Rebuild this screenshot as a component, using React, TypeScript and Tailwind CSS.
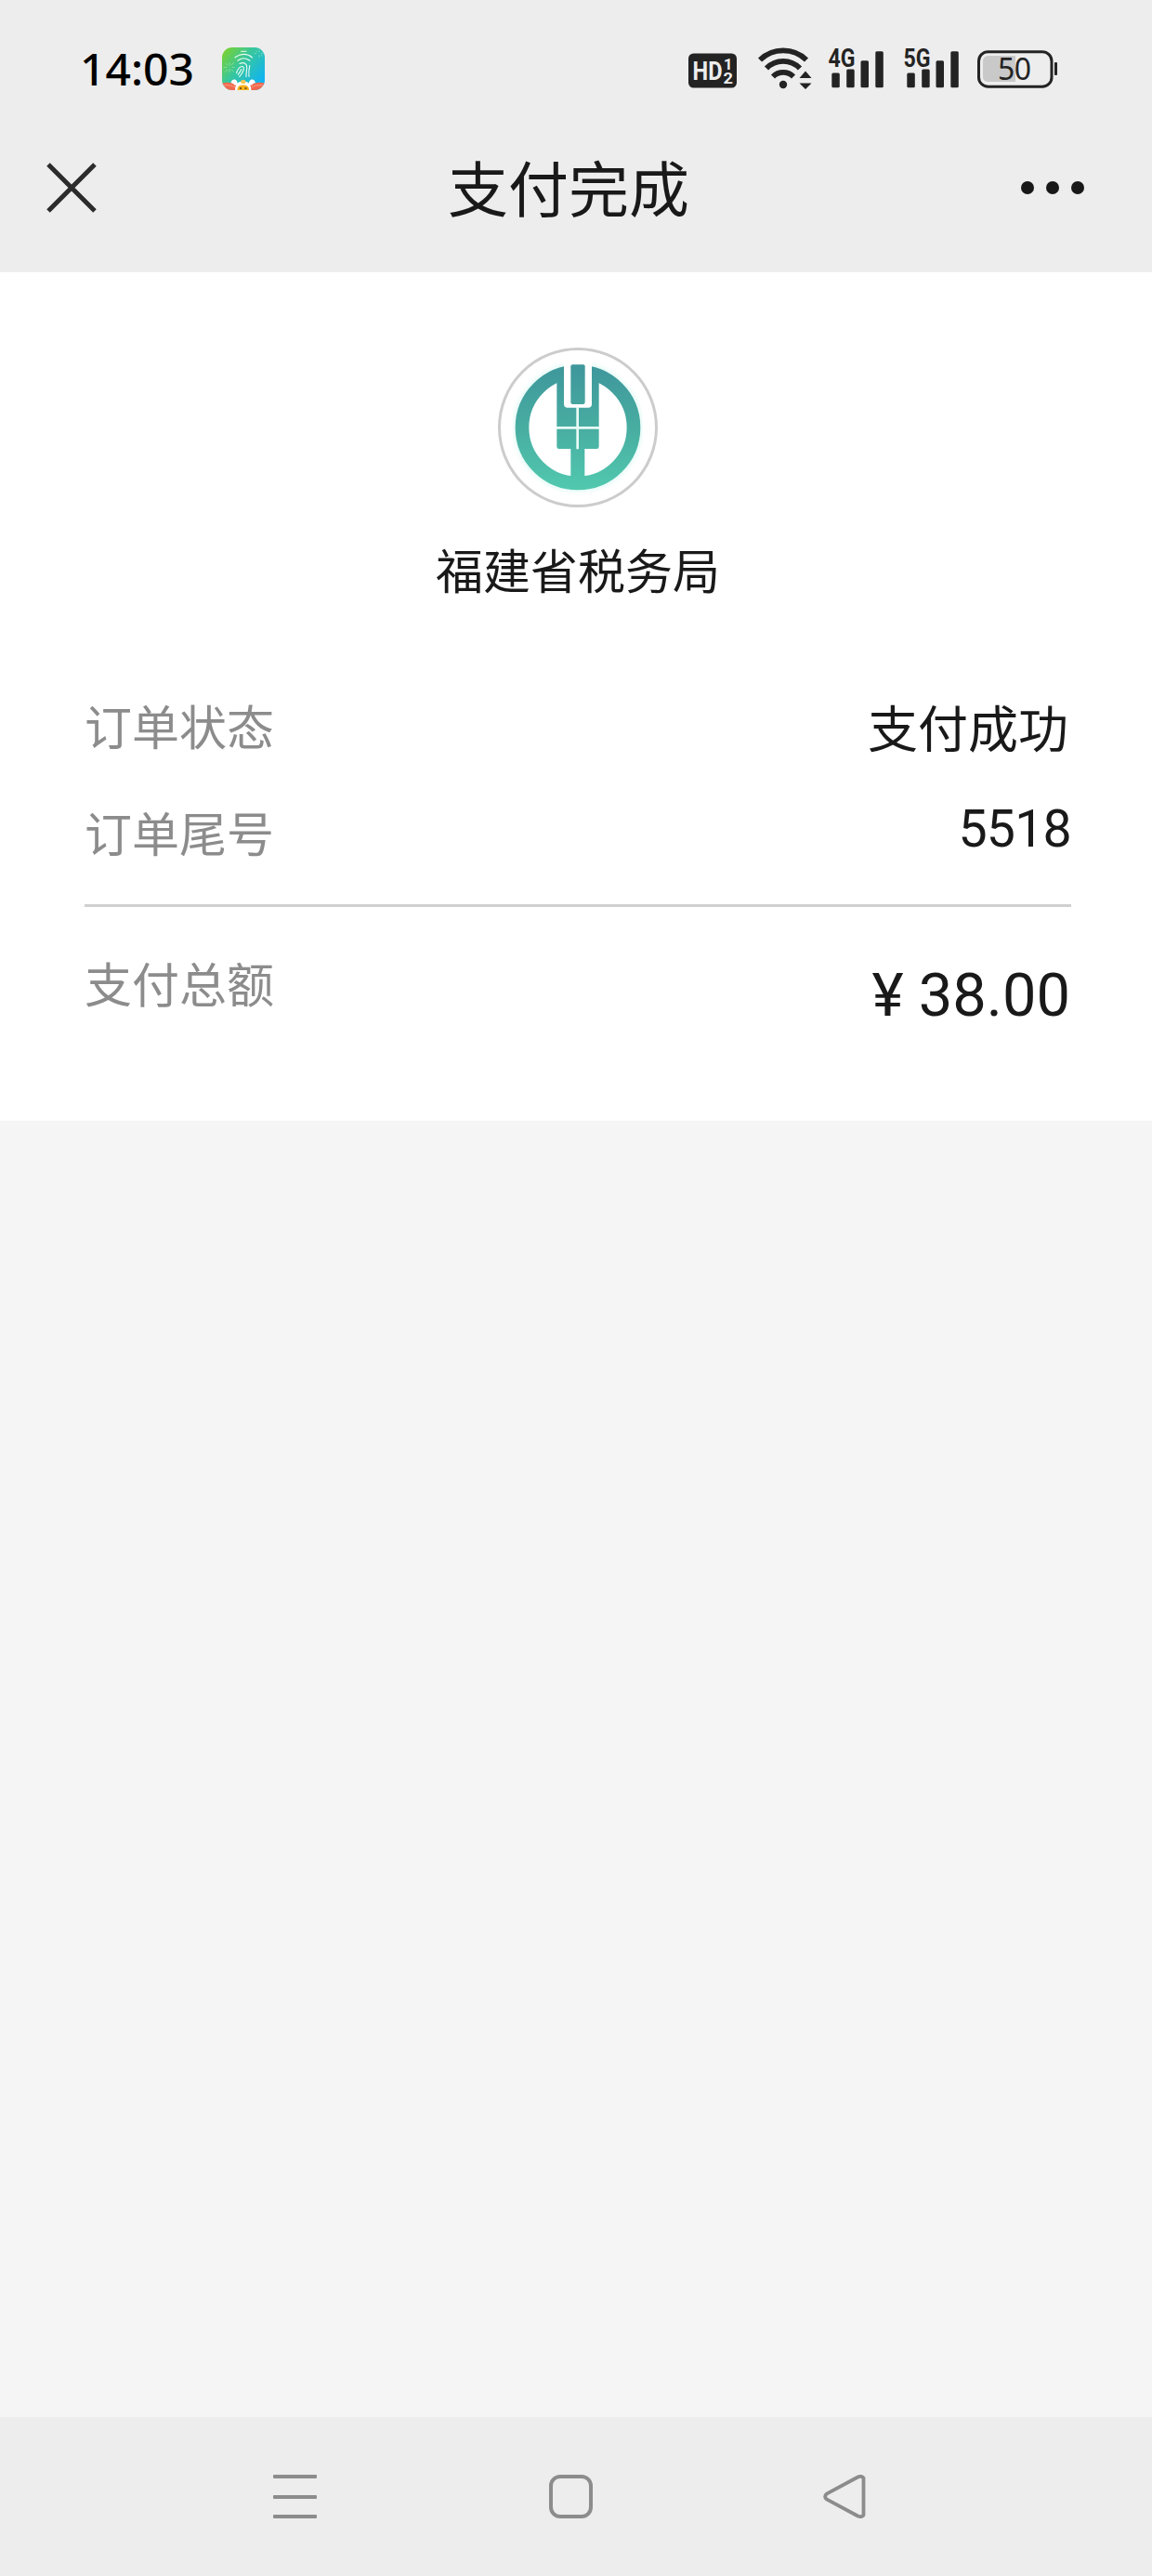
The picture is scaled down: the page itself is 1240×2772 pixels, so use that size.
import React from 'react';

interface OrderRow {
  label: string;
  value: string;
  valueClass: string;
}

const orderRows: OrderRow[] = [
  {
    label: '订单状态',
    value: '支付成功',
    valueClass: "mr-[3px] text-[54px] leading-[64px] font-['Noto_Sans_CJK_SC',sans-serif]",
  },
  {
    label: '订单尾号',
    value: '5518',
    valueClass: "text-[55.5px] leading-[56px] tracking-[-0.8px] font-['Roboto',sans-serif]",
  },
];

const AppBadge: React.FC = () => (
  <svg className="size-[46px]" viewBox="0 0 46 46" fill="none">
    <defs>
      <linearGradient id="badge" x1="0" y1="0" x2="1" y2="0.8">
        <stop offset="0" stopColor="#84d321" />
        <stop offset="0.45" stopColor="#38c79b" />
        <stop offset="1" stopColor="#0db2fb" />
      </linearGradient>
      <clipPath id="badgeClip">
        <rect width="46" height="46" rx="11" />
      </clipPath>
    </defs>
    <g clipPath="url(#badgeClip)">
      <rect width="46" height="46" fill="url(#badge)" />
      {/* fingerprint strokes */}
      <g stroke="#e9fbf3" strokeWidth="1.1" strokeLinecap="round">
        <path d="M20.500 4.200h5.500" />
        <path d="M14 11c5-4.800 13.500-4.800 18.500 0" />
        <path d="M16.800 14.200c4-3.200 9.200-3.200 13.200 0" />
        <path d="M19 17.500c5-2.200 8 .2 7.700 4.500-.2 3-.8 6-.7 9.500" />
        <path d="M15.500 27.500c1.200-3.500 3-6.500 5.500-7 2.200-.3 2.800 1.500 2 4-.8 2.700-2.300 5-4.300 7.200" />
        <path d="M20.700 23.500c-.8 2.200-2 4-3.500 5.800" />
        <path d="M29.800 19.500c-1 4-1.200 8-.8 12" />
      </g>
      {/* fireworks */}
      <g stroke="#c5efb0" strokeWidth="0.6" opacity="0.8">
        <path d="M8 20v-4M8 23v4M5.500 21.500h-4M10.500 21.500h3M6 19l-2.500-2M10 19l3-3M6 24l-2.500 2M10 24l2.500 2" />
        <path d="M40 5.500v-3M40 8v3M37 6.500h-2.500M42 6.500h2.500M38 5l-1.500-1.500M42 8l1.500 1.500" />
      </g>
      {/* lion mascot */}
      <path d="M0 38.500c5-1.500 11-1 16 2V46H0zM46 38.500c-5-1.500-11-1-16 2V46h16z" fill="#f2694e" />
      <path d="M2 41c5-1 9 0 12 2M44 41c-5-1-9 0-12 2" stroke="#f9b39c" strokeWidth="0.7" />
      <path d="M9.500 38c1-4 5-4.500 6.500-1.500l1.500 4H13c0-1.500-2-2-3.500-2.500zM36 38c-1-4-5-4.500-6.500-1.500l-1.500 4h4.500c0-1.500 2-2 3.500-2.500z" fill="#fff" />
      <path d="M14 46c0-6.500 3.500-9.500 8.700-9.500s8.700 3 8.700 9.500z" fill="#fff" />
      <path d="M16.500 46c0-4 2-5.500 6.200-5.500S29 42 29 46z" fill="#f6b21d" />
      <rect x="20.300" y="35" width="5" height="4" rx="1.500" fill="#f7c653" />
      <path d="M19 44h2M24.500 44h2" stroke="#533a16" strokeWidth="1.500" />
    </g>
  </svg>
);

const HdIcon: React.FC = () => (
  <svg className="h-[46px] w-[52px]" viewBox="0 0 52 46">
    <rect x="0" y="6.500" width="52" height="37" rx="5.500" fill="#232323" />
    <g fill="#ededed" fontFamily="Roboto, sans-serif" fontWeight="700">
      <text x="4.500" y="35" fontSize="28.500" textLength="32" lengthAdjust="spacingAndGlyphs">HD</text>
      <text x="38" y="24" fontSize="17" textLength="9.500" lengthAdjust="spacingAndGlyphs">1</text>
      <text x="37.500" y="38.500" fontSize="17" textLength="10.500" lengthAdjust="spacingAndGlyphs">2</text>
    </g>
  </svg>
);

const WifiIcon: React.FC = () => (
  <svg className="h-[46px] w-[58px]" viewBox="0 0 58 46" fill="none">
    <g stroke="#232323" strokeWidth="5.800">
      <path d="M2 13.500A36 36 0 0 1 52 13.500" />
      <path d="M9 22.500A25 25 0 0 1 45 22.500" />
      <path d="M16 31.500A15.500 15.500 0 0 1 38 31.500" />
    </g>
    <circle cx="27" cy="40" r="4.200" fill="#232323" />
    <path d="M51 25.500l6.500 7.500h-13zM51 45l6.500-6.500h-13z" fill="#232323" />
  </svg>
);

const SignalIcon: React.FC<{ label: string }> = ({ label }) => (
  <svg className="h-[46px] w-[60px] overflow-visible" viewBox="0 0 60 46" fill="#232323">
    <text
      x="0.500"
      y="21"
      fontSize="27"
      fontWeight="700"
      fontFamily="Roboto, sans-serif"
      textLength="29"
      lengthAdjust="spacingAndGlyphs"
    >
      {label}
    </text>
    <rect x="4.300" y="27.500" width="8.500" height="15.700" rx="1.500" />
    <rect x="20.200" y="23.500" width="8.500" height="19.700" rx="1.500" />
    <rect x="35.500" y="14.300" width="8.500" height="28.900" rx="1.500" />
    <rect x="51.300" y="4.200" width="8.500" height="39" rx="1.500" />
  </svg>
);

const BatteryIcon: React.FC = () => (
  <svg className="h-[46px] w-[87px]" viewBox="0 0 87 46">
    <rect x="1.500" y="4.700" width="78.500" height="37.500" rx="10" fill="none" stroke="#232323" strokeWidth="3" />
    <path d="M41 9H12q-6 0-6 6v17q0 5 6 5h29z" fill="#c9c9c9" />
    <rect x="83" y="16" width="3" height="14" rx="1" fill="#232323" />
    <text x="22" y="34.500" fontSize="32" fontFamily="'Noto Sans', sans-serif" textLength="36" fill="#232323">50</text>
  </svg>
);

const BankLogo: React.FC = () => (
  <div className="flex size-[172px] items-center justify-center rounded-full border-[3px] border-[#cccccc] bg-white">
    <svg className="size-[140px]" viewBox="0 0 420 420">
      <defs>
        <linearGradient id="bank" x1="0" y1="0" x2="0" y2="420" gradientUnits="userSpaceOnUse">
          <stop offset="0.050" stopColor="#3f989c" />
          <stop offset="0.500" stopColor="#48ada1" />
          <stop offset="0.950" stopColor="#51c7ae" />
        </linearGradient>
        <filter id="glow" x="-10%" y="-10%" width="120%" height="120%">
          <feGaussianBlur stdDeviation="8" />
        </filter>
      </defs>
      <circle cx="210" cy="210" r="182" fill="none" stroke="#dffaf5" strokeWidth="50" filter="url(#glow)" />
      <circle cx="210" cy="210" r="158" fill="#fff" />
      <circle cx="210" cy="210" r="180" fill="none" stroke="url(#bank)" strokeWidth="44" />
      <path d="M165 0h90v146h-90z" fill="#fff" />
      <path
        d="M142 55l23-42v121q0 12 12 12h66q12 0 12-12V13l23 42v217q0 7-7 7h-39v110h-45V279h-38q-7 0-7-7z"
        fill="url(#bank)"
      />
      <rect x="187" y="7" width="46" height="128" rx="6" fill="url(#bank)" />
      <path d="M209 142v138M141 211h138" stroke="#e8fbf6" strokeWidth="8" />
    </svg>
  </div>
);

const StatusBar: React.FC = () => (
  <div className="flex h-[148px] items-center pr-[101px] pl-[86px]">
    <span className="w-[153px] font-['Noto_Sans',sans-serif] text-[48px] leading-none font-medium text-black">14:03</span>
    <AppBadge />
    <div className="ml-auto flex items-center">
      <HdIcon />
      <div className="ml-[23px] flex"><WifiIcon /></div>
      <div className="ml-[17px] flex"><SignalIcon label="4G" /></div>
      <div className="ml-[21px] flex"><SignalIcon label="5G" /></div>
      <div className="ml-[20px] flex"><BatteryIcon /></div>
    </div>
  </div>
);

const TitleBar: React.FC = () => (
  <div className="flex h-[108px] items-center pr-[73px] pl-[50px]">
    <svg className="size-[54px]" viewBox="0 0 54 54" stroke="#2b2b2b" strokeWidth="5">
      <path d="M2 2l50 50M52 2L2 52" />
    </svg>
    <h1 className="-mt-[3px] ml-[378px] text-[65px] leading-[105px] font-normal">支付完成</h1>
    <div className="ml-auto flex gap-[13px]">
      <span className="size-[14px] rounded-full bg-[#181818]" />
      <span className="size-[14px] rounded-full bg-[#181818]" />
      <span className="size-[14px] rounded-full bg-[#181818]" />
    </div>
  </div>
);

const NavBar: React.FC = () => (
  <nav className="flex h-[171px] items-center pl-[294px]">
    <div className="flex h-[47px] w-[47px] flex-col justify-between">
      <span className="h-1 rounded-[1px] bg-[#8c8c8c]" />
      <span className="h-1 rounded-[1px] bg-[#8c8c8c]" />
      <span className="h-1 rounded-[1px] bg-[#8c8c8c]" />
    </div>
    <span className="ml-[250px] size-[47px] rounded-[12px] border-4 border-[#8c8c8c]" />
    <svg className="ml-[248px] h-[47px] w-[46px]" viewBox="0 0 46 47" fill="none">
      <path
        d="M3.700 20.700Q.500 23.500 3.700 26.300L36.500 44Q41 46.500 43.500 43.500V3.500Q41 .500 36.500 3z"
        stroke="#8c8c8c"
        strokeWidth="3.800"
        strokeLinejoin="round"
      />
    </svg>
  </nav>
);

const App: React.FC = () => {
  return (
    <div className="flex h-[2772px] w-[1240px] flex-col bg-[#ededed] font-['Noto_Sans_CJK_SC',sans-serif] text-[#191919]">
      <header className="h-[293px]">
        <StatusBar />
        <TitleBar />
      </header>

      <main className="flex-1 bg-[#f5f5f5]">
        <section className="h-[913px] bg-white pt-[81px] pr-[87px] pl-[91px]">
          <div className="flex flex-col items-center">
            <BankLogo />
            <p className="mt-[36px] text-[51px] leading-[60px]">福建省税务局</p>
          </div>

          <div className="mt-[108px] flex flex-col gap-[51px]">
            {orderRows.map((row) => (
              <div key={row.label} className="flex items-start justify-between">
                <span className="text-[51px] leading-[60px] text-[#8c8c8c]">{row.label}</span>
                <span className={row.valueClass}>{row.value}</span>
              </div>
            ))}
          </div>

          <div className="mt-[48px] h-[3px] bg-[#d0d0d0]" />

          <div className="mt-[51px] flex items-start justify-between">
            <span className="text-[51px] leading-[60px] text-[#8c8c8c]">支付总额</span>
            <span className="mr-px font-['Roboto',sans-serif] text-[65px] leading-[88px]">¥ 38.00</span>
          </div>
        </section>
      </main>

      <NavBar />
    </div>
  );
};

export default App;
